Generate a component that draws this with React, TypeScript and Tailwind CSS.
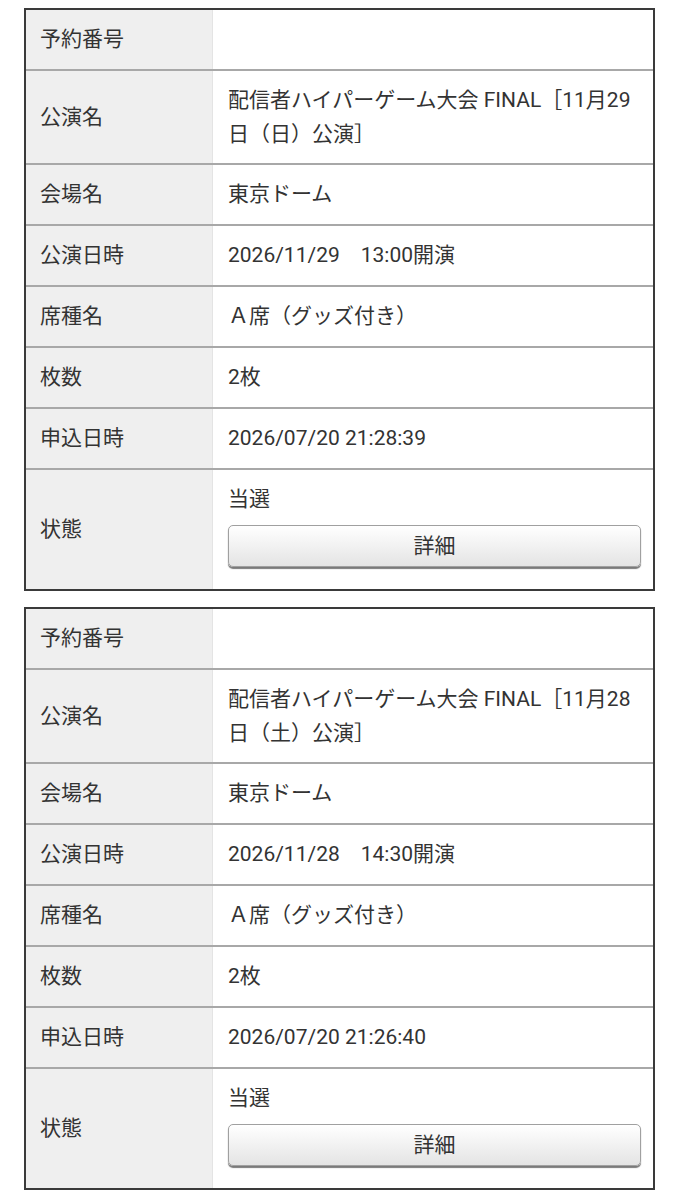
const FONT = "font-['Roboto','Noto_Sans_CJK_JP',sans-serif]";

interface Reservation {
  title: string;
  venue: string;
  date: string;
  seat: string;
  count: string;
  applied: string;
  status: string;
}

const reservations: Reservation[] = [
  {
    title: "配信者ハイパーゲーム大会 FINAL［11月29日（日）公演］",
    venue: "東京ドーム",
    date: "2026/11/29\u300013:00開演",
    seat: "Ａ席（グッズ付き）",
    count: "2枚",
    applied: "2026/07/20 21:28:39",
    status: "当選",
  },
  {
    title: "配信者ハイパーゲーム大会 FINAL［11月28日（土）公演］",
    venue: "東京ドーム",
    date: "2026/11/28\u300014:30開演",
    seat: "Ａ席（グッズ付き）",
    count: "2枚",
    applied: "2026/07/20 21:26:40",
    status: "当選",
  },
];

function Row({
  label,
  children,
  last,
}: {
  label: string;
  children?: React.ReactNode;
  last?: boolean;
}) {
  return (
    <div className={`flex ${last ? "" : "border-b-2 border-[#a8a8a8]"}`}>
      <div className="flex w-[187px] shrink-0 items-center border-r border-[#e4e4e4] bg-[#efefef] pl-[14px]">
        {label}
      </div>
      <div className="min-w-0 flex-1 py-3 pl-[15px] pr-3">{children}</div>
    </div>
  );
}

function ReservationCard({ r }: { r: Reservation }) {
  return (
    <div className="border-2 border-[#3a3a3a] bg-white">
      <Row label="予約番号">
        <div className="h-[35px]" />
      </Row>
      <Row label="公演名">
        <div className="leading-[34px]">{r.title}</div>
      </Row>
      <Row label="会場名">{r.venue}</Row>
      <Row label="公演日時">
        <span className="whitespace-pre">{r.date}</span>
      </Row>
      <Row label="席種名">{r.seat}</Row>
      <Row label="枚数">{r.count}</Row>
      <Row label="申込日時">{r.applied}</Row>
      <Row label="状態" last>
        <div>{r.status}</div>
        <button
          type="button"
          className="mb-[10px] mt-2 flex h-[42px] w-full items-center justify-center rounded-[5px] border border-[#a0a0a0] bg-[linear-gradient(#ffffff,#e4e4e4)] text-[21px] text-[#333] shadow-[0_2px_1px_#7a7a7a]"
        >
          詳細
        </button>
      </Row>
    </div>
  );
}

export default function App() {
  return (
    <div
      className={`${FONT} min-h-[1200px] bg-white px-6 pt-2 text-[21px] leading-[35px] text-[#333]`}
    >
      <div className="flex flex-col gap-4">
        {reservations.map((r, i) => (
          <ReservationCard key={i} r={r} />
        ))}
      </div>
    </div>
  );
}
